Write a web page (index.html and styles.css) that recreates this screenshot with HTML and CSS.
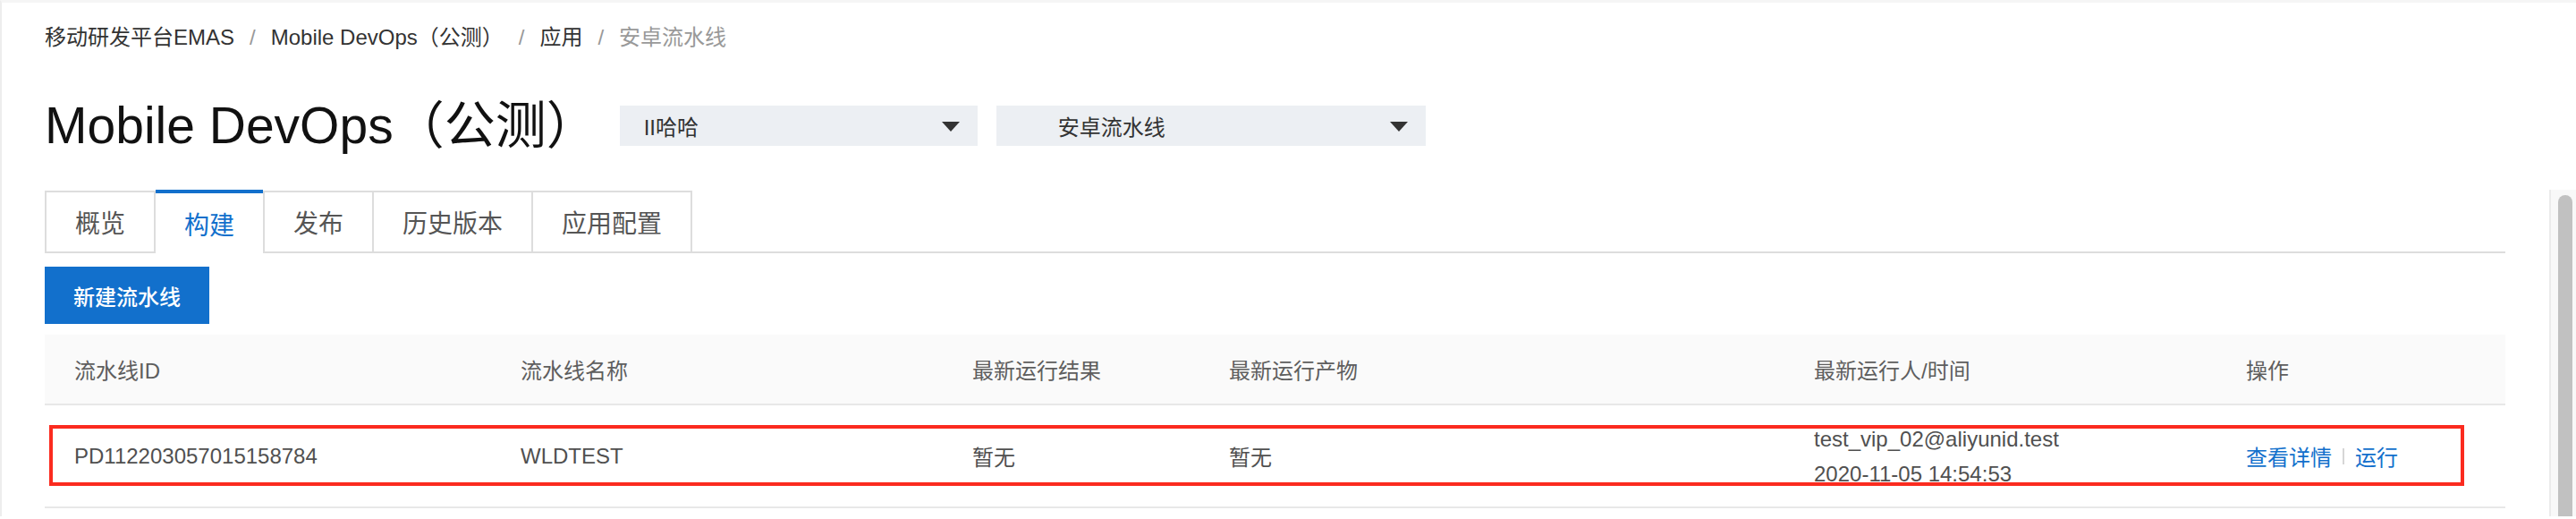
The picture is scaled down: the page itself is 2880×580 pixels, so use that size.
FILE: index.html
```html
<!DOCTYPE html>
<html lang="zh-CN">
<head>
<meta charset="utf-8">
<title>Mobile DevOps</title>
<link rel="stylesheet" href="styles.css">
</head>
<body>
<div class="page">
  <nav class="crumbs">
    <span class="crumb">移动研发平台EMAS</span><span class="sep">/</span>
    <span class="crumb">Mobile DevOps（公测）</span><span class="sep">/</span>
    <span class="crumb">应用</span><span class="sep">/</span>
    <span class="crumb current">安卓流水线</span>
  </nav>

  <div class="titlebar">
    <h1 class="title">Mobile DevOps（公测）</h1>
    <div class="selects">
      <div class="select s1"><span class="select-text">II哈哈</span><i class="caret"></i></div>
      <div class="select s2"><span class="select-text">安卓流水线</span><i class="caret"></i></div>
    </div>
  </div>

  <div class="tabs">
    <div class="tab">概览</div>
    <div class="tab active">构建</div>
    <div class="tab">发布</div>
    <div class="tab">历史版本</div>
    <div class="tab">应用配置</div>
  </div>

  <div class="toolbar">
    <button class="btn">新建流水线</button>
  </div>

  <div class="table">
    <div class="row head">
      <div class="cell">流水线ID</div>
      <div class="cell">流水线名称</div>
      <div class="cell">最新运行结果</div>
      <div class="cell">最新运行产物</div>
      <div class="cell">最新运行人/时间</div>
      <div class="cell">操作</div>
    </div>
    <div class="body">
      <div class="row data">
        <div class="cell">PD112203057015158784</div>
        <div class="cell">WLDTEST</div>
        <div class="cell">暂无</div>
        <div class="cell">暂无</div>
        <div class="cell multi"><span>test_vip_02@aliyunid.test</span><span>2020-11-05 14:54:53</span></div>
        <div class="cell actions"><a class="link">查看详情</a><span class="divider"></span><a class="link">运行</a></div>
      </div>
      <div class="highlight"></div>
    </div>
  </div>
</div>
<div class="scrollbar"><div class="thumb"></div></div>
</body>
</html>
```
FILE: styles.css
```css
html, body {
  margin: 0;
  padding: 0;
  background: #fff;
}
body {
  font-family: "Liberation Sans", "Noto Sans CJK SC", sans-serif;
  color: #333;
  border-left: 2px solid #ededed;
  border-top: 3px solid #f5f5f5;
  min-height: 577px;
  box-sizing: border-box;
  position: relative;
  overflow: hidden;
}
.page {
  padding: 19px 79px 0 48px;
}

/* breadcrumb */
.crumbs {
  display: flex;
  align-items: center;
  height: 40px;
  font-size: 24px;
  line-height: 40px;
  color: #333;
  white-space: nowrap;
}
.crumb.current { color: #999; }
.sep {
  color: #999;
  margin: 0 17px;
}

/* title */
.titlebar {
  display: flex;
  align-items: center;
  height: 64px;
  margin-top: 46px;
}
.title {
  margin: 0;
  font-size: 57px;
  font-weight: 400;
  line-height: 64px;
  color: #111;
  white-space: nowrap;
}
.selects {
  display: flex;
  gap: 21px;
  margin-left: 25px;
}
.select {
  position: relative;
  height: 45px;
  background: #eceff3;
  display: flex;
  align-items: center;
  box-sizing: border-box;
  font-size: 24px;
  color: #333;
}
.select.s1 { width: 400px; padding-left: 27px; }
.select.s2 { width: 480px; padding-left: 69px; }
.caret {
  position: absolute;
  right: 20px;
  top: 18px;
  width: 0;
  height: 0;
  border-left: 10.5px solid transparent;
  border-right: 10.5px solid transparent;
  border-top: 11px solid #333;
}

/* tabs */
.tabs {
  display: flex;
  align-items: flex-end;
  margin-top: 40px;
  height: 71px;
  border-bottom: 2px solid #dddddd;
  box-sizing: border-box;
}
.tab {
  height: 70px;
  margin-bottom: -2px;
  box-sizing: border-box;
  border: 2px solid #dddddd;
  padding: 0 32px;
  display: flex;
  align-items: center;
  font-size: 28px;
  color: #555;
  background: #fff;
}
.tab + .tab { margin-left: -2px; }
.tab.active {
  height: 71px;
  border: 0;
  border-top: 4px solid #1270cc;
  color: #1270cc;
  padding: 0 32px;
  margin-left: 0;
  position: relative;
}
.tab.active + .tab { margin-left: 0; }

/* toolbar */
.toolbar {
  margin-top: 15px;
}
.btn {
  height: 64px;
  padding: 0 32px;
  border: 0;
  background: #1270cc;
  color: #fff;
  font-family: "Liberation Sans", "Noto Sans CJK SC", sans-serif;
  font-size: 24px;
  font-weight: 500;
  cursor: pointer;
}

/* table */
.table {
  margin-top: 12px;
}
.row {
  display: grid;
  grid-template-columns: 499px 505px 287px 654px 483px 1fr;
  align-items: center;
  border-bottom: 2px solid #e8e8e8;
}
.row.head {
  height: 77px;
  background: #fafafa;
  font-size: 24px;
  color: #5e5e5e;
}
.row.data {
  height: 113px;
  font-size: 24px;
  color: #505050;
}
.cell {
  padding-left: 33px;
  white-space: nowrap;
}
.cell.multi {
  display: flex;
  flex-direction: column;
  line-height: 39px;
}
.cell.actions {
  display: flex;
  align-items: center;
}
.link {
  color: #1270cc;
  cursor: pointer;
}
.divider {
  width: 2px;
  height: 18px;
  background: #d6d6d6;
  margin: 0 12px;
}
.body {
  position: relative;
}
.highlight {
  position: absolute;
  left: 5px;
  right: 46px;
  top: 22px;
  height: 68px;
  border: 4px solid #fb2b1f;
  box-sizing: border-box;
  pointer-events: none;
}

/* scrollbar overlay */
.scrollbar {
  position: absolute;
  left: 2848px;
  top: 209px;
  width: 28px;
  bottom: 0;
  background: #f8f8f8;
  border-left: 2px solid #ebebeb;
}
.thumb {
  position: absolute;
  left: 8px;
  top: 6px;
  width: 16px;
  bottom: 0;
  border-radius: 8px 8px 0 0;
  background: #c1c1c1;
}
```
